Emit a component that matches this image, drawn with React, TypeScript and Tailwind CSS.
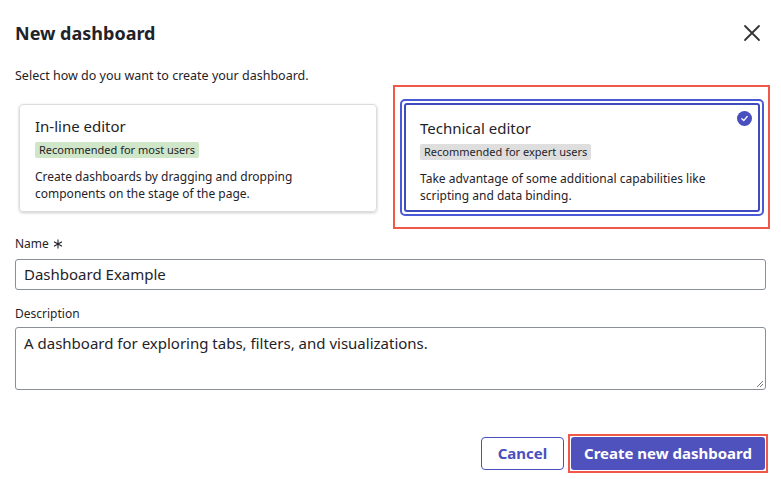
import React from 'react';

const App: React.FC = () => {
  return (
    <div className="w-[781px] h-[485px] bg-white text-[#1f2329] font-['Lato',sans-serif] relative">
      <div className="flex items-center justify-between pl-[15px] pr-[20px] pt-[21px]">
        <h1 className="text-[18px] font-bold leading-[24px]">New dashboard</h1>
        <svg width="18" height="18" viewBox="0 0 18 18" stroke="#333" strokeWidth="1.8" strokeLinecap="round">
          <path d="M2 2L16 16M16 2L2 16" />
        </svg>
      </div>
      <p className="text-[12.5px] pl-[15px] mt-[23px] leading-[16px]">Select how do you want to create your dashboard.</p>

      <div className="flex items-start pl-[19px] mt-[1px]">
        <div className="w-[358px] h-[108px] mt-[19px] rounded-[4px] border border-[#dcdcdc] shadow-[0_1px_3px_rgba(0,0,0,0.2)] px-[15px] pt-[11px]">
          <div className="text-[15px] leading-[20px]">In-line editor</div>
          <span className="inline-block mt-[2px] bg-[#cfe6c8] text-[11px] px-[4px] leading-[16px] rounded-[2px]">Recommended for most users</span>
          <p className="text-[12px] leading-[17px] mt-[8px]">Create dashboards by dragging and dropping components on the stage of the page.</p>
        </div>
        <div className="ml-[16px] w-[377px] h-[144px] border-2 border-[#f0584a] pl-[5px] pr-[4px] pt-[12px]">
          <div className="h-[117px] rounded-[5px] border-2 border-[#4a5ad6] p-[2px]">
            <div className="h-full rounded-[3px] border-2 border-[#3f4cbf] px-[14px] pt-[13px] relative">
              <div className="text-[15px] leading-[20px]">Technical editor</div>
              <span className="inline-block mt-[2px] bg-[#dedede] text-[11px] px-[4px] leading-[16px] rounded-[2px]">Recommended for expert users</span>
              <p className="text-[12px] leading-[17px] mt-[8px]">Take advantage of some additional capabilities like scripting and data binding.</p>
              <div className="absolute top-[6px] right-[6px] w-[15px] h-[15px] rounded-full bg-[#4a4fc0] flex items-center justify-center">
                <svg width="9" height="9" viewBox="0 0 10 10" fill="none" stroke="white" strokeWidth="1.4" strokeLinecap="round" strokeLinejoin="round">
                  <path d="M2 5.2L4.2 7.3L8 2.8" />
                </svg>
              </div>
            </div>
          </div>
        </div>
      </div>

      <div className="px-[15px] mt-[7px]">
        <label className="text-[12px] leading-[16px] flex items-center gap-[4px]">Name
          <svg width="10" height="10" viewBox="0 0 10 10" stroke="#1f2329" strokeWidth="1.1"><path d="M5 0.5V9.5M1 2.8L9 7.2M9 2.8L1 7.2" /></svg>
        </label>
        <div className="mt-[7px] h-[31px] rounded-[3px] border border-[#8a8f98] px-[8px] flex items-center text-[15px]">Dashboard Example</div>
        <label className="block text-[12px] leading-[16px] mt-[16px]">Description</label>
        <div className="mt-[5px] h-[63px] rounded-[3px] border border-[#8a8f98] px-[8px] pt-[5px] text-[15px] leading-[20px] relative">
          A dashboard for exploring tabs, filters, and visualizations.
          <svg className="absolute right-[1px] bottom-[1px]" width="8" height="8" viewBox="0 0 8 8" stroke="#777" strokeWidth="1">
            <path d="M7 1L1 7M7 4L4 7" />
          </svg>
        </div>
      </div>

      <div className="flex justify-end items-center pr-[13px] mt-[44px]">
        <button className="h-[33px] w-[83px] rounded-[4px] border border-[#4a4fc0] text-[#4a4fc0] font-bold text-[15px]">Cancel</button>
        <div className="ml-[4px] border-2 border-[#f0584a] p-[1px]">
          <button className="h-[33px] w-[194px] rounded-[3px] bg-[#4f52bd] text-white font-bold text-[15px]">Create new dashboard</button>
        </div>
      </div>
    </div>
  );
};

export default App;
